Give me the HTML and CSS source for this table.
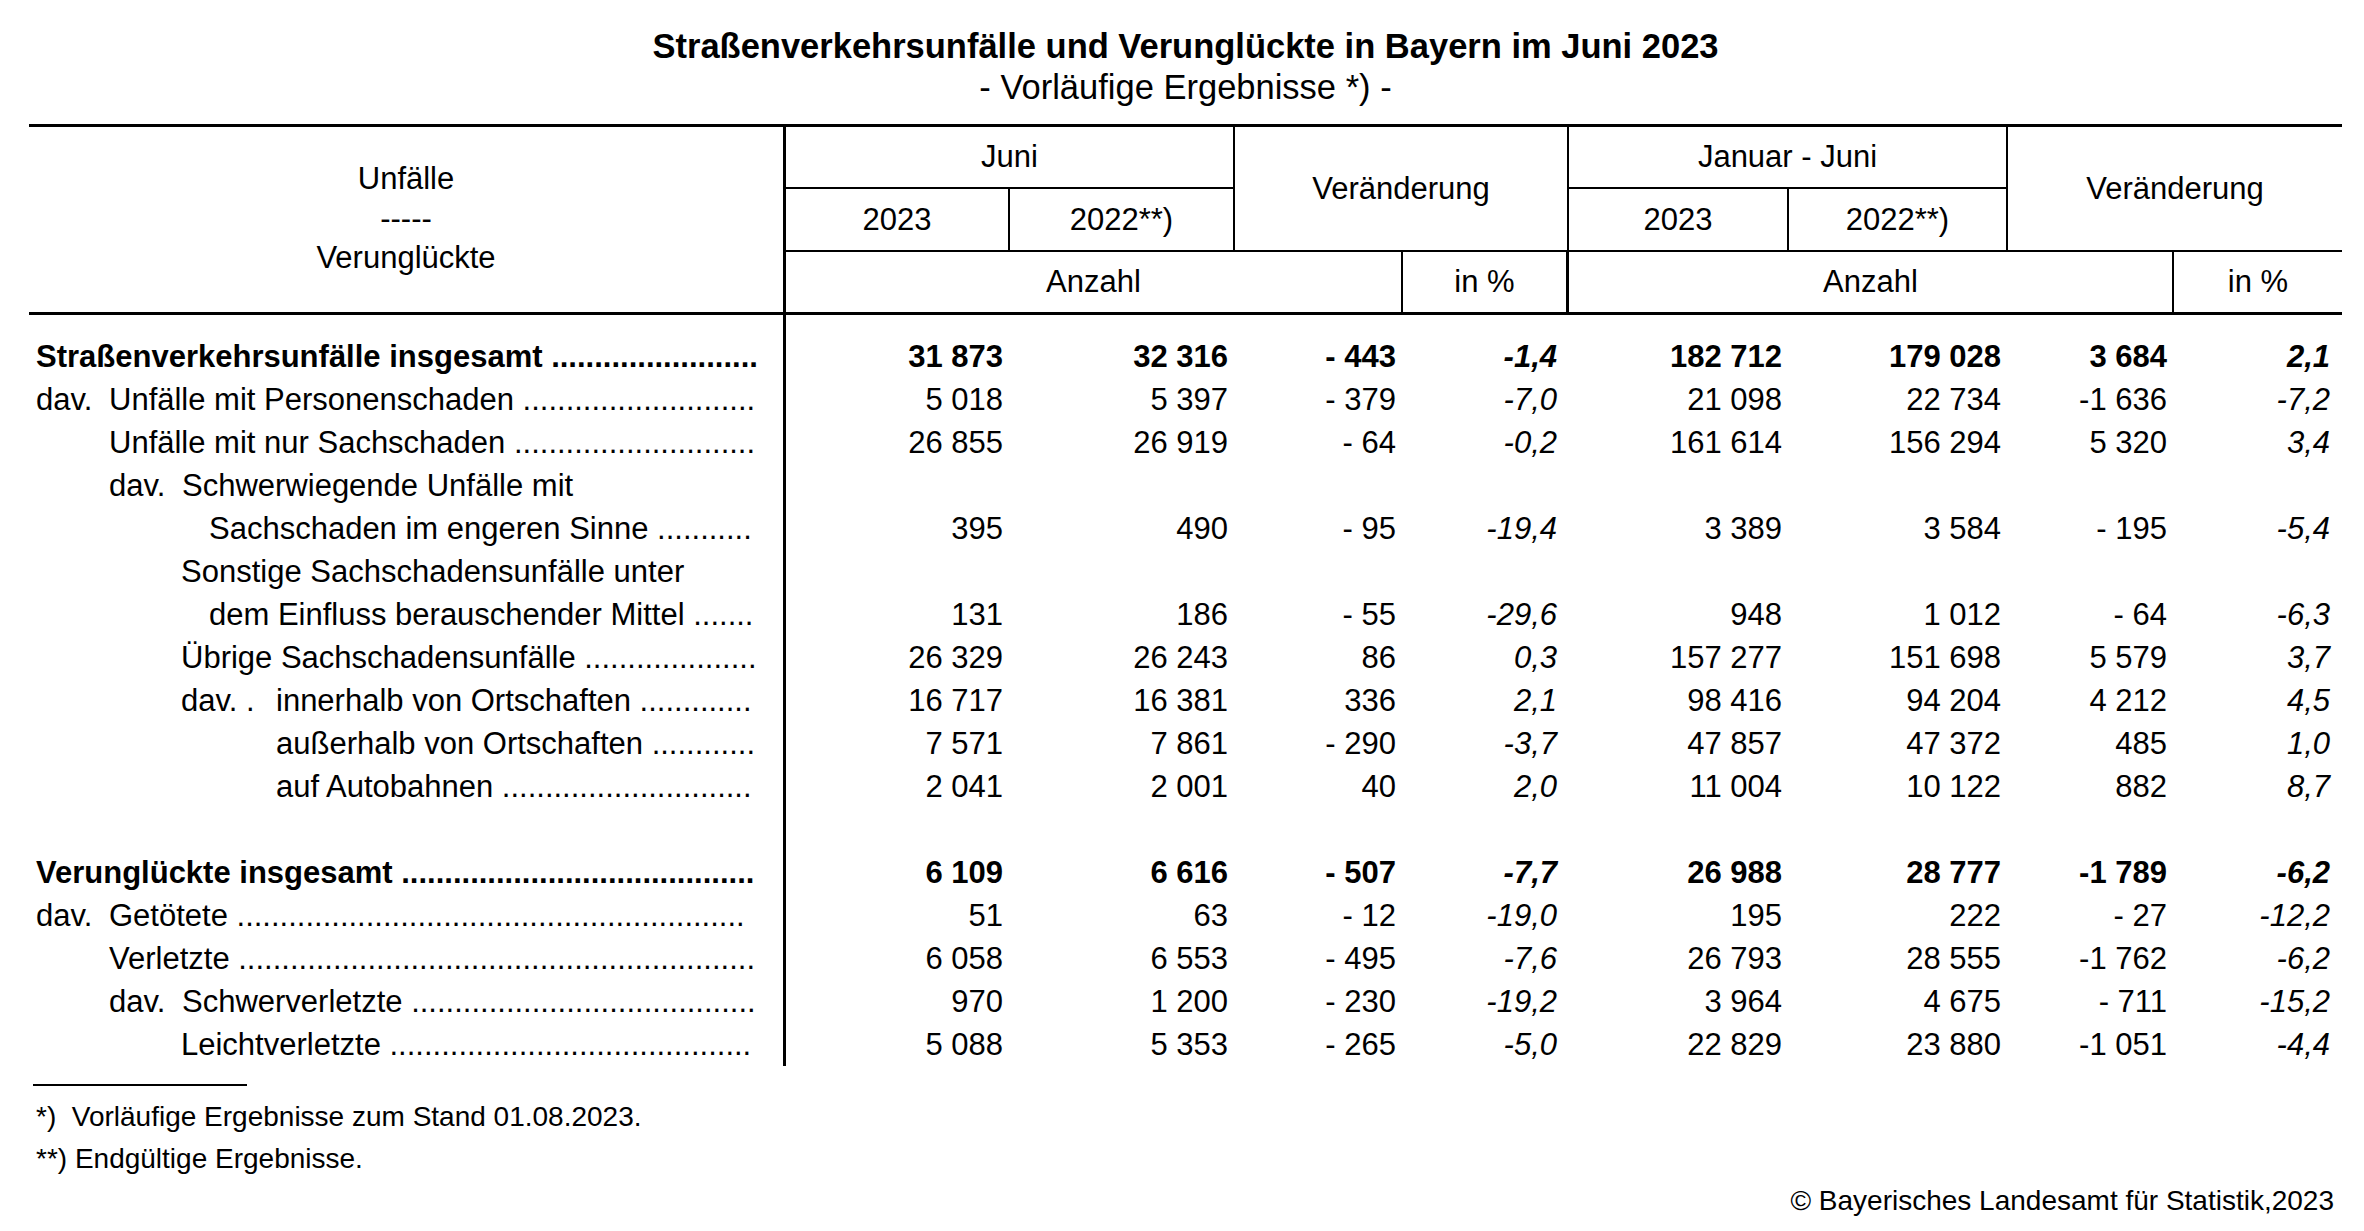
FILE: index.html
```html
<!DOCTYPE html>
<html lang="de">
<head>
<meta charset="utf-8">
<title>Straßenverkehrsunfälle und Verunglückte in Bayern im Juni 2023</title>
<link rel="stylesheet" href="styles.css">
</head>
<body>
<div class="page">
  <h1 class="title">Straßenverkehrsunfälle und Verunglückte in Bayern im Juni 2023</h1>
  <div class="subtitle">- Vorläufige Ergebnisse *) -</div>

  <div class="hdr">
    <div class="h-label"><span>Unfälle</span><span>-----</span><span>Verunglückte</span></div>
    <div class="hc h-juni">Juni</div>
    <div class="hc h-ver1">Veränderung</div>
    <div class="hc h-jan">Januar - Juni</div>
    <div class="hc h-ver2">Veränderung</div>
    <div class="hc h-y1">2023</div>
    <div class="hc h-y2">2022**)</div>
    <div class="hc h-y3">2023</div>
    <div class="hc h-y4">2022**)</div>
    <div class="hc h-anz1">Anzahl</div>
    <div class="hc h-pct1">in %</div>
    <div class="hc h-anz2">Anzahl</div>
    <div class="hc h-pct2">in %</div>
  </div>

  <div class="body">
    <div class="row b">
      <div class="lab">Straßenverkehrsunfälle insgesamt ........................</div>
      <div class="n">31 873</div><div class="n">32 316</div><div class="n">- 443</div><div class="p">-1,4</div>
      <div class="n">182 712</div><div class="n">179 028</div><div class="n">3 684</div><div class="p">2,1</div>
    </div>
    <div class="row">
      <div class="lab"><span class="pre">dav.</span>Unfälle mit Personenschaden ...........................</div>
      <div class="n">5 018</div><div class="n">5 397</div><div class="n">- 379</div><div class="p">-7,0</div>
      <div class="n">21 098</div><div class="n">22 734</div><div class="n">-1 636</div><div class="p">-7,2</div>
    </div>
    <div class="row">
      <div class="lab l1">Unfälle mit nur Sachschaden ............................</div>
      <div class="n">26 855</div><div class="n">26 919</div><div class="n">- 64</div><div class="p">-0,2</div>
      <div class="n">161 614</div><div class="n">156 294</div><div class="n">5 320</div><div class="p">3,4</div>
    </div>
    <div class="row">
      <div class="lab l1"><span class="pre">dav.</span>Schwerwiegende Unfälle mit</div>
      <div></div><div></div><div></div><div></div><div></div><div></div><div></div><div></div>
    </div>
    <div class="row">
      <div class="lab l3">Sachschaden im engeren Sinne ...........</div>
      <div class="n">395</div><div class="n">490</div><div class="n">- 95</div><div class="p">-19,4</div>
      <div class="n">3 389</div><div class="n">3 584</div><div class="n">- 195</div><div class="p">-5,4</div>
    </div>
    <div class="row">
      <div class="lab l2">Sonstige Sachschadensunfälle unter</div>
      <div></div><div></div><div></div><div></div><div></div><div></div><div></div><div></div>
    </div>
    <div class="row">
      <div class="lab l3">dem Einfluss berauschender Mittel .......</div>
      <div class="n">131</div><div class="n">186</div><div class="n">- 55</div><div class="p">-29,6</div>
      <div class="n">948</div><div class="n">1 012</div><div class="n">- 64</div><div class="p">-6,3</div>
    </div>
    <div class="row">
      <div class="lab l2">Übrige Sachschadensunfälle ....................</div>
      <div class="n">26 329</div><div class="n">26 243</div><div class="n">86</div><div class="p">0,3</div>
      <div class="n">157 277</div><div class="n">151 698</div><div class="n">5 579</div><div class="p">3,7</div>
    </div>
    <div class="row">
      <div class="lab l2"><span class="pre wide">dav. .</span>innerhalb von Ortschaften .............</div>
      <div class="n">16 717</div><div class="n">16 381</div><div class="n">336</div><div class="p">2,1</div>
      <div class="n">98 416</div><div class="n">94 204</div><div class="n">4 212</div><div class="p">4,5</div>
    </div>
    <div class="row">
      <div class="lab l4">außerhalb von Ortschaften ............</div>
      <div class="n">7 571</div><div class="n">7 861</div><div class="n">- 290</div><div class="p">-3,7</div>
      <div class="n">47 857</div><div class="n">47 372</div><div class="n">485</div><div class="p">1,0</div>
    </div>
    <div class="row">
      <div class="lab l4">auf Autobahnen .............................</div>
      <div class="n">2 041</div><div class="n">2 001</div><div class="n">40</div><div class="p">2,0</div>
      <div class="n">11 004</div><div class="n">10 122</div><div class="n">882</div><div class="p">8,7</div>
    </div>
    <div class="row blank"></div>
    <div class="row b">
      <div class="lab">Verunglückte insgesamt .........................................</div>
      <div class="n">6 109</div><div class="n">6 616</div><div class="n">- 507</div><div class="p">-7,7</div>
      <div class="n">26 988</div><div class="n">28 777</div><div class="n">-1 789</div><div class="p">-6,2</div>
    </div>
    <div class="row">
      <div class="lab"><span class="pre">dav.</span>Getötete ...........................................................</div>
      <div class="n">51</div><div class="n">63</div><div class="n">- 12</div><div class="p">-19,0</div>
      <div class="n">195</div><div class="n">222</div><div class="n">- 27</div><div class="p">-12,2</div>
    </div>
    <div class="row">
      <div class="lab l1">Verletzte ............................................................</div>
      <div class="n">6 058</div><div class="n">6 553</div><div class="n">- 495</div><div class="p">-7,6</div>
      <div class="n">26 793</div><div class="n">28 555</div><div class="n">-1 762</div><div class="p">-6,2</div>
    </div>
    <div class="row">
      <div class="lab l1"><span class="pre">dav.</span>Schwerverletzte ........................................</div>
      <div class="n">970</div><div class="n">1 200</div><div class="n">- 230</div><div class="p">-19,2</div>
      <div class="n">3 964</div><div class="n">4 675</div><div class="n">- 711</div><div class="p">-15,2</div>
    </div>
    <div class="row">
      <div class="lab l2">Leichtverletzte ..........................................</div>
      <div class="n">5 088</div><div class="n">5 353</div><div class="n">- 265</div><div class="p">-5,0</div>
      <div class="n">22 829</div><div class="n">23 880</div><div class="n">-1 051</div><div class="p">-4,4</div>
    </div>
  </div>

  <div class="rule"></div>
  <div class="notes">
    <div class="note">*)  Vorläufige Ergebnisse zum Stand 01.08.2023.</div>
    <div class="note">**) Endgültige Ergebnisse.</div>
  </div>
  <div class="copy">© Bayerisches Landesamt für Statistik,2023</div>
</div>
</body>
</html>
```
FILE: styles.css
```css
* { box-sizing: border-box; }

html, body {
  margin: 0;
  padding: 0;
  background: #fff;
  color: #000;
  overflow: hidden;
}

body {
  font-family: "Liberation Sans", Arial, sans-serif;
  font-size: 31px;
}

.page {
  width: 2313px;
  margin-left: 29px;
  padding-top: 26px;
}

.title {
  margin: 0;
  font-size: 34.5px;
  font-weight: bold;
  line-height: 41px;
  text-align: center;
}

.subtitle {
  font-size: 34.5px;
  line-height: 41px;
  text-align: center;
  margin-bottom: 16px;
}

/* ---------- header ---------- */
.hdr {
  display: grid;
  grid-template-columns: 757px 224px 225px 168px 166px 220px 219px 166px 168px;
  grid-template-rows: 62px 63px 60px;
  border-top: 3px solid #000;
  border-bottom: 3px solid #000;
}

.h-label {
  grid-column: 1;
  grid-row: 1 / 4;
  border-right: 3px solid #000;
  display: flex;
  flex-direction: column;
  align-items: center;
  justify-content: center;
  line-height: 39.5px;
  padding-bottom: 2px;
}

.hc {
  display: flex;
  align-items: center;
  justify-content: center;
  white-space: nowrap;
}

.h-juni { grid-column: 2 / 4; grid-row: 1; border-right: 2px solid #000; border-bottom: 2px solid #000; }
.h-ver1 { grid-column: 4 / 6; grid-row: 1 / 3; border-right: 2px solid #000; border-bottom: 2px solid #000; }
.h-jan  { grid-column: 6 / 8; grid-row: 1; border-right: 2px solid #000; border-bottom: 2px solid #000; }
.h-ver2 { grid-column: 8 / 10; grid-row: 1 / 3; border-bottom: 2px solid #000; }
.h-y1   { grid-column: 2; grid-row: 2; border-right: 2px solid #000; border-bottom: 2px solid #000; }
.h-y2   { grid-column: 3; grid-row: 2; border-right: 2px solid #000; border-bottom: 2px solid #000; }
.h-y3   { grid-column: 6; grid-row: 2; border-right: 2px solid #000; border-bottom: 2px solid #000; }
.h-y4   { grid-column: 7; grid-row: 2; border-right: 2px solid #000; border-bottom: 2px solid #000; }
.h-anz1 { grid-column: 2 / 5; grid-row: 3; border-right: 2px solid #000; }
.h-pct1 { grid-column: 5; grid-row: 3; border-right: 3px solid #000; }
.h-anz2 { grid-column: 6 / 9; grid-row: 3; border-right: 2px solid #000; }
.h-pct2 { grid-column: 9; grid-row: 3; }

/* ---------- body ---------- */
.body {
  padding-top: 20px;
  background: linear-gradient(#000, #000) no-repeat 754px 0 / 3px 100%;
}

.row {
  display: grid;
  grid-template-columns: 757px 224px 225px 168px 166px 220px 219px 166px 168px;
  height: 43px;
  line-height: 43px;
  white-space: nowrap;
}

.row.b { font-weight: bold; }

.lab {
  padding-left: 7px;
}

.lab.l1 { padding-left: 80px; }
.lab.l2 { padding-left: 152px; }
.lab.l3 { padding-left: 180px; }
.lab.l4 { padding-left: 247px; }

.pre { display: inline-block; width: 73px; }
.pre.wide { width: 95px; }

.n {
  text-align: right;
  padding-right: 7px;
}

.p {
  text-align: right;
  padding-right: 12px;
  font-style: italic;
}

/* ---------- footnotes ---------- */
.rule {
  width: 214px;
  height: 2px;
  background: #000;
  margin: 18px 0 10px 4px;
}

.notes {
  font-size: 28px;
  line-height: 42px;
  padding-left: 7px;
}

.note { white-space: pre; }

.copy {
  font-size: 28px;
  line-height: 42px;
  text-align: right;
  padding-right: 8px;
}
```
